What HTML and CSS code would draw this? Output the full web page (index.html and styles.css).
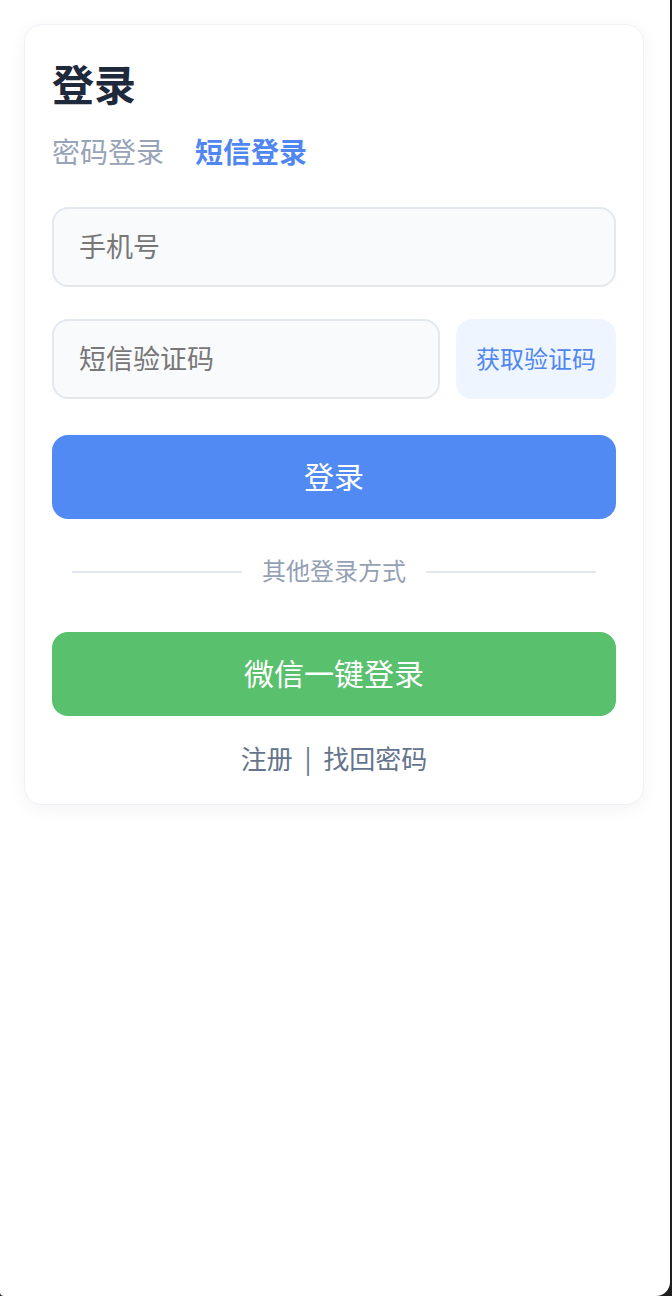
FILE: index.html
```html
<!DOCTYPE html>
<html lang="zh-CN">
<head>
    <meta charset="UTF-8">
    <meta name="viewport" content="width=device-width, initial-scale=1.0">
    <title>登录</title>
    <link rel="stylesheet" href="styles.css">
</head>
<body>
    <div class="screen">
        <div class="card">
            <h1 class="title">登录</h1>

            <div class="tabs">
                <span class="tab">密码登录</span>
                <span class="tab active">短信登录</span>
            </div>

            <div class="form-group">
                <input type="tel" class="field" placeholder="手机号">
            </div>

            <div class="form-group code-row">
                <input type="text" class="field" placeholder="短信验证码">
                <button class="code-btn">获取验证码</button>
            </div>

            <button class="btn btn-primary">登录</button>

            <div class="divider">
                <span class="divider-line"></span>
                <span class="divider-text">其他登录方式</span>
                <span class="divider-line"></span>
            </div>

            <button class="btn btn-wechat">微信一键登录</button>

            <div class="links">
                <a href="#">注册</a>
                <span class="sep">|</span>
                <a href="#">找回密码</a>
            </div>
        </div>
    </div>
</body>
</html>
```

FILE: styles.css
```css
html {
    background: #1f1f1f;
}

body {
    margin: 0;
    font-family: "Noto Sans CJK SC", "Noto Sans", sans-serif;
}

.screen {
    width: 670px;
    min-height: 1296px;
    box-sizing: border-box;
    padding: 24px;
    background: #fff;
    border-radius: 0 0 14px 4px;
}

.card {
    width: 620px;
    box-sizing: border-box;
    padding: 30px 27px 28px;
    background: #fff;
    border: 1px solid #eef1f6;
    border-radius: 18px;
    box-shadow: 0 4px 18px rgba(15, 23, 42, 0.05);
}

.title {
    margin: 0;
    font-size: 42px;
    line-height: 56px;
    font-weight: 700;
    color: #1e293b;
}

.tabs {
    display: flex;
    gap: 31px;
    margin-top: 20px;
    font-size: 28px;
    line-height: 40px;
}

.tab {
    color: #98a3b7;
}

.tab.active {
    color: #4f86f1;
    font-weight: 700;
}

.form-group {
    margin-top: 36px;
}

.form-group + .form-group {
    margin-top: 32px;
}

.code-row {
    display: flex;
    gap: 16px;
}

.field {
    display: block;
    width: 100%;
    height: 80px;
    box-sizing: border-box;
    padding: 0 25px 4px;
    border: 2px solid #e3e8ef;
    border-radius: 16px;
    background: #f8fafc;
    font-family: inherit;
    font-size: 27px;
    color: #333;
    outline: none;
}

.field::placeholder {
    color: #777;
}

.code-row .field {
    flex: 1;
}

.code-btn {
    flex: 0 0 160px;
    height: 80px;
    padding: 0 0 4px;
    border: none;
    border-radius: 16px;
    background: #eff5fe;
    color: #4f86f1;
    font-family: inherit;
    font-size: 24px;
    cursor: pointer;
}

.btn {
    display: block;
    width: 100%;
    height: 84px;
    padding: 0 0 5px;
    border: none;
    border-radius: 16px;
    color: #fff;
    font-family: inherit;
    font-size: 30px;
    cursor: pointer;
}

.btn-primary {
    margin-top: 36px;
    background: #528af4;
}

.btn-wechat {
    background: #59c06e;
}

.divider {
    display: flex;
    align-items: center;
    gap: 20px;
    height: 34px;
    margin: 36px 20px 43px;
}

.divider-line {
    flex: 1;
    height: 2px;
    background: #e3e8ef;
}

.divider-text {
    padding-bottom: 5px;
    font-size: 24px;
    color: #94a0b4;
}

.links {
    margin-top: 24px;
    text-align: center;
    font-size: 26px;
    line-height: 36px;
    color: #64748b;
}

.links a {
    color: #64748b;
    text-decoration: none;
}

.sep {
    margin: 0 6px;
}
```
